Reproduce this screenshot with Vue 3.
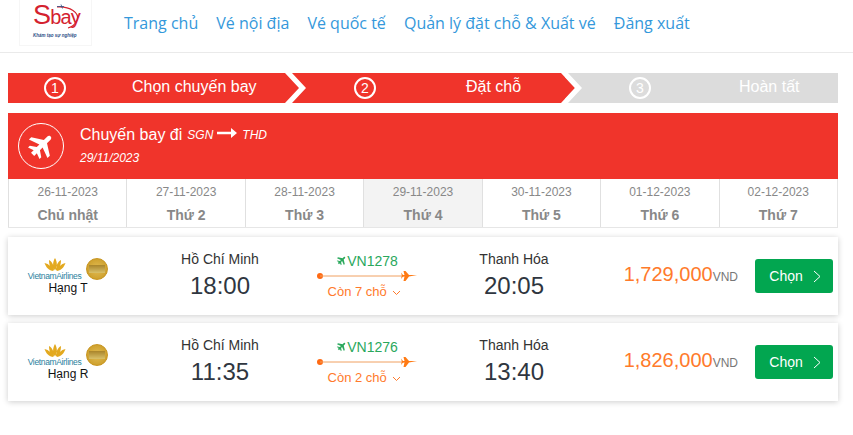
<script setup>
const nav = ['Trang chủ', 'Vé nội địa', 'Vé quốc tế', 'Quản lý đặt chỗ & Xuất vé', 'Đăng xuất']
const days = [
  ['26-11-2023', 'Chủ nhật'], ['27-11-2023', 'Thứ 2'], ['28-11-2023', 'Thứ 3'], ['29-11-2023', 'Thứ 4'],
  ['30-11-2023', 'Thứ 5'], ['01-12-2023', 'Thứ 6'], ['02-12-2023', 'Thứ 7'],
]
const flights = [
  { cls: 'Hạng T', dep: '18:00', code: 'VN1278', seats: 'Còn 7 chỗ', arr: '20:05', price: '1,729,000' },
  { cls: 'Hạng R', dep: '11:35', code: 'VN1276', seats: 'Còn 2 chỗ', arr: '13:40', price: '1,826,000' },
]
const plane = 'M2.500 10.200 L5.500 10.200 L3.800 5.500 L5.800 5.500 L9 10.200 L12 10.200 L8.800 1.500 L11.500 1.500 L17 10.200 L21 10.200 C23.500 10.200 23.500 13.800 21 13.800 L17 13.800 L11.500 22.500 L8.800 22.500 L12 13.800 L9 13.800 L5.800 18.500 L3.800 18.500 L5.500 13.800 L2.500 13.800 Z'
</script>

<template>
  <div class="page">
    <header class="top">
      <div class="logo">
        <div class="logo-word"><span class="logo-s">S</span><span class="logo-bay">bay</span></div>
        <div class="logo-sub">Khám tạo sự nghiệp</div>
        <svg class="logo-arc" width="32" height="28" viewBox="0 0 32 28"><path d="M9 4C22 3 32 10 29 17C27 22 24 24 20 25" fill="none" stroke="#d4222f" stroke-width="1.100"/><path d="M9 3.500h7M13 1.500l1.500 4" stroke="#2d4f86" stroke-width=".8"/></svg>
      </div>
      <nav class="nav"><a v-for="n in nav" :key="n">{{ n }}</a></nav>
    </header>

    <main class="content">
      <div class="steps">
        <div class="step s1"><span class="num">1</span><span class="lbl">Chọn chuyến bay</span></div>
        <div class="step s2"><span class="num">2</span><span class="lbl">Đặt chỗ</span></div>
        <div class="step s3"><span class="num">3</span><span class="lbl">Hoàn tất</span></div>
        <svg class="chev c1" width="21" height="30" viewBox="0 0 21 30"><path d="M0 0H7L21 15 7 30H0L14 15Z" fill="#fff"/></svg>
        <svg class="chev c2" width="21" height="30" viewBox="0 0 21 30"><path d="M0 0L14 15 0 30Z" fill="#f0342b"/><path d="M0 0H7L21 15 7 30H0L14 15Z" fill="#fff"/></svg>
      </div>

      <section class="banner">
        <div class="circle">
          <svg width="30" height="30" viewBox="0 0 24 24"><path :d="plane" fill="#fff" transform="rotate(-45 12 12)"/></svg>
        </div>
        <div class="banner-text">
          <div class="route"><span>Chuyến bay đi</span><i>SGN</i>
            <svg class="arrow" width="20" height="10" viewBox="0 0 20 10"><path d="M0 3.800h14V0l6 5-6 5V6.200H0z" fill="#fff"/></svg>
            <i>THD</i></div>
          <div class="date">29/11/2023</div>
        </div>
      </section>

      <div class="days">
        <div v-for="(d, i) in days" :key="d[0]" class="day" :class="{ active: i === 3 }">
          <div class="d-date">{{ d[0] }}</div>
          <div class="d-name">{{ d[1] }}</div>
        </div>
      </div>

      <div class="flights">
        <article v-for="f in flights" :key="f.code" class="row">
          <div class="airline">
            <div class="air-logos">
              <div class="va">
                <svg width="22" height="13" viewBox="0 0 22 13"><path d="M11 12.500C8.500 9 8.500 4 11 0c2.500 4 2.500 9 0 12.500zM10 12.500C6.500 11 5 7 5 2c3.500 2 5 6 5 10.500zM12 12.500c3.500-1.500 5-5.500 5-10.500-3.500 2-5 6-5 10.500zM9.500 13C5 12.500 2 9.500 .5 5c4.500 1 7.500 4 9 8zM12.500 13c4.500-.5 7.500-3.500 9-8-4.500 1-7.500 4-9 8z" fill="#e3a91f"/></svg>
                <span>VietnamAirlines</span>
              </div>
              <div class="medal"><span></span></div>
            </div>
            <div class="cls">{{ f.cls }}</div>
          </div>
          <div class="place dep"><div class="city">Hồ Chí Minh</div><div class="time">{{ f.dep }}</div></div>
          <div class="mid">
            <div class="code">
              <svg width="11" height="11" viewBox="0 0 24 24"><path :d="plane" fill="#2aa85c" transform="rotate(-45 12 12)"/></svg>
              <span>{{ f.code }}</span>
            </div>
            <div class="line">
              <svg width="100" height="12" viewBox="0 0 100 12"><circle cx="3" cy="6" r="3" fill="#ff6a13"/><path d="M3 6h84" stroke="#f0a060" stroke-width="1"/><path d="M84 2.500l2 2.500h1.500L86.500 1h2l3.500 4h8l-8 1.500-3.500 4.500h-2l1-4.500H86l-2 2.500.8-3.500z" fill="#ff7a13"/></svg>
            </div>
            <div class="seats">{{ f.seats }}
              <svg width="9" height="6" viewBox="0 0 9 6"><path d="M1 1l3.500 3.500L8 1" fill="none" stroke="#ff7a2b" stroke-width="1"/></svg>
            </div>
          </div>
          <div class="place arr"><div class="city">Thanh Hóa</div><div class="time">{{ f.arr }}</div></div>
          <div class="price"><span class="amt">{{ f.price }}</span><span class="cur">VND</span></div>
          <button class="pick">Chọn
            <svg width="8" height="13" viewBox="0 0 8 13"><path d="M1 1l6 5.500L1 12" fill="none" stroke="#fff" stroke-width="1"/></svg>
          </button>
        </article>
      </div>
    </main>
  </div>
</template>

<style>
html, body { margin: 0; background: #fff; overflow: hidden; }
</style>

<style scoped>
.page { width: 853px; height: 435px; overflow: hidden; font-family: "Liberation Sans", Arial, sans-serif; color: #333; background: #fff; }
.top { height: 52px; border-bottom: 1px solid #eaeaea; display: flex; padding-left: 19px; }
.logo { position: relative; width: 71px; height: 45px; border: 1px solid #f6f6f6; border-top: 0; text-align: left; }
.logo-word { color: #d4222f; line-height: 1; height: 33px; padding-left: 13px; white-space: nowrap; letter-spacing: -.8px; }
.logo-s { font-size: 27px; position: relative; top: 2px; }
.logo-bay { font-size: 20px; position: relative; top: 2px; }
.logo-sub { font: italic 700 4.500px/6px "Liberation Sans", sans-serif; color: #2d4f86; white-space: nowrap; padding-left: 13px; }
.logo-arc { position: absolute; left: 28px; top: 3px; }
.nav { display: flex; gap: 18.100px; margin-left: 32px; height: 45px; align-items: center; font: 16px "Open Sans", sans-serif; color: #3498db; white-space: nowrap; }
.content { padding: 20px 15px 0 8px; }
.steps { position: relative; display: grid; grid-template-columns: 280px 277px 273px; height: 30px; font-size: 16px; color: #fff; }
.step { position: relative; background: #f0342b; }
.s3 { background: #dcdcdc; }
.num { position: absolute; left: 36px; top: 4px; width: 22px; height: 22px; box-sizing: border-box; border: 2px solid #fff; border-radius: 50%; font-size: 14px; line-height: 18px; text-align: center; }
.s2 .num { left: 66px; }
.s3 .num { left: 64px; }
.lbl { position: absolute; white-space: nowrap; top: 5px; line-height: 18px; }
.s1 .lbl { left: 124px; }
.s2 .lbl { left: 178px; }
.s3 .lbl { left: 174px; }
.chev { position: absolute; top: 0; }
.c1 { left: 277px; }
.c2 { left: 553px; }
.banner { margin-top: 10px; height: 66px; background: #f0342b; color: #fff; display: flex; align-items: center; padding-left: 10px; }
.circle { width: 46px; height: 46px; box-sizing: border-box; border: 1px solid #fff; border-radius: 50%; display: flex; align-items: center; justify-content: center; }
.banner-text { margin: 0 0 3px 16px; }
.route { font-size: 16px; line-height: 22px; white-space: nowrap; display: flex; align-items: center; }
.route i { font-size: 12px; line-height: 22px; margin-top: 1px; }
.route span { margin-right: 5px; }
.arrow { margin: 0 5px 3px 4px; }
.date { font-size: 12px; line-height: 16px; font-style: italic; margin-top: 4px; }
.days { display: grid; grid-template-columns: repeat(7, 1fr); height: 49px; box-sizing: border-box; border-bottom: 1px solid #e6e6e6; border-right: 1px solid #e6e6e6; }
.day { border-left: 1px solid #e0e0e0; text-align: center; color: #888; padding-top: 5px; }
.day.active { background: #f3f3f3; }
.d-date { font-size: 12px; line-height: 16px; }
.d-name { font-size: 14px; line-height: 16px; font-weight: 700; margin-top: 7px; }
.flights { margin-top: 9px; display: flex; flex-direction: column; gap: 8px; }
.row { height: 78px; background: #fff; box-shadow: 0 1px 6px rgba(0,0,0,.2); display: flex; align-items: center; position: relative; }
.airline { width: 80px; margin-left: 20px; text-align: center; }
.air-logos { display: flex; align-items: flex-start; }
.va { width: 53px; display: flex; flex-direction: column; align-items: center; line-height: 8px; }
.va svg { display: block; margin-bottom: 1px; }
.va span { font-size: 8.500px; line-height: 8px; color: #2a7f9e; letter-spacing: -.35px; white-space: nowrap; }
.medal { width: 22px; height: 22px; box-sizing: border-box; border: 1px solid #c8951f; border-radius: 50%; background: radial-gradient(circle, #e2bd55, #c7961f); display: flex; align-items: center; justify-content: center; margin-left: 5px; }
.medal span { width: 16px; height: 8px; background: linear-gradient(#a9842a, #d9c16a); }
.cls { font-size: 12px; line-height: 14px; color: #111; margin-top: 1px; white-space: nowrap; }
.place { text-align: center; color: #333; margin-top: -2px; }
.dep { width: 100px; margin-left: 62px; }
.arr { width: 100px; margin-left: 47px; }
.city { font-size: 14px; line-height: 16px; }
.time { font-size: 24px; line-height: 28px; margin-top: 5px; color: #2f3640; }
.mid { width: 100px; margin-left: 47px; text-align: center; margin-top: -2px; }
.code { color: #2aa85c; font-size: 14px; line-height: 16px; margin-top: 3px; }
.line { height: 12px; margin-top: 1px; }
.line svg { display: block; }
.seats { color: #ff7a2b; font-size: 13px; line-height: 16px; margin: 2px 0 0 -5px; }
.seats svg { margin-left: 2px; }
.price { position: absolute; right: 100px; top: 26px; white-space: nowrap; }
.amt { color: #ff7a2b; font-size: 20px; }
.cur { color: #777; font-size: 12px; }
.pick { position: absolute; right: 5px; top: 22px; width: 78px; height: 34px; background: #02a650; border: 0; border-radius: 3px; color: #fff; font: 14px "Liberation Sans", sans-serif; display: flex; align-items: center; justify-content: center; gap: 10px; padding: 0 0 0 2px; }
</style>
